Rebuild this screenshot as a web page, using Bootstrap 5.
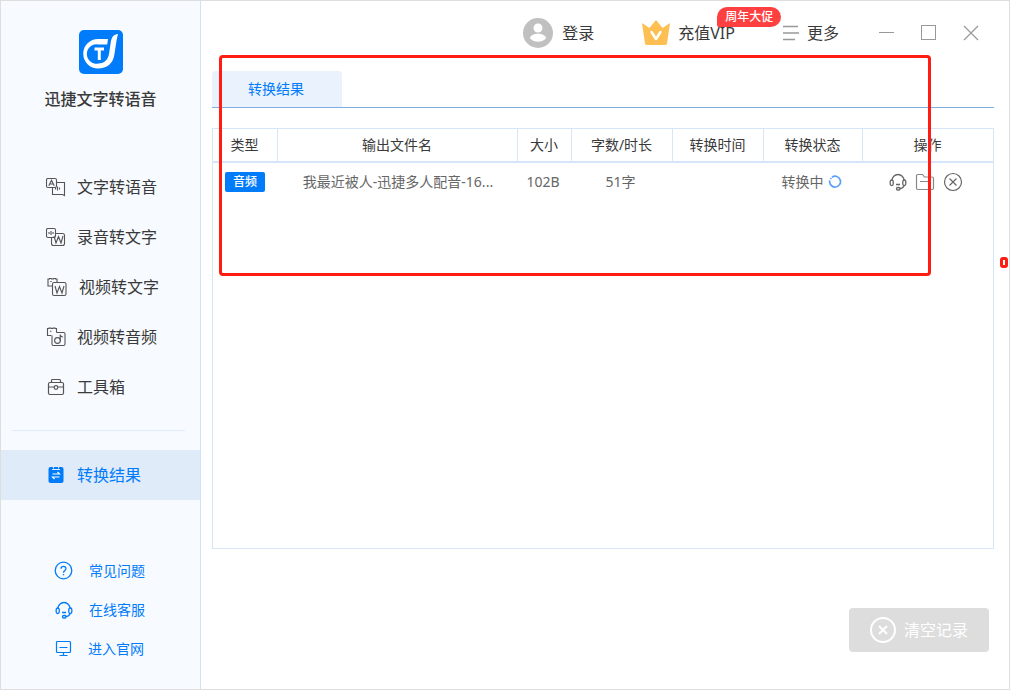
<!DOCTYPE html>
<html lang="zh-CN">
<head>
<meta charset="utf-8">
<meta name="viewport" content="width=device-width, initial-scale=1">
<title>迅捷文字转语音</title>
<link href="https://cdn.jsdelivr.net/npm/bootstrap@5.3.0/dist/css/bootstrap.min.css" rel="stylesheet">
<style>
  body { font-family: "Noto Sans", "Noto Sans CJK SC", sans-serif; font-size: 14px; line-height: 20px; color: #3a3a3a; background: #fff; }
  svg { display: block; flex: none; }
  button { color: inherit; }
  .app { border: 1px solid #dedede; }
  .side { width: 200px; flex: none; background: #f7faff; border-right: 1px solid #cfe2f7; }
  .brand { padding-top: 29px; height: 161px; }
  .brand h1 { font-size: 16px; line-height: 24px; font-weight: 500; margin: 13px 0 0; }
  .side-link { height: 50px; padding-left: 45px; gap: 11px; font-size: 16px; color: #3a3a3a; text-decoration: none; }
  .side-link.active { background: #dfebf8; color: #007bfa; }
  .side-rule { height: 1px; margin: 18px 15px 19px 11px; background: #dfedfb; }
  .help { margin-top: 51px; }
  .help a { height: 39px; padding-left: 53px; gap: 15px; color: #007bfa; text-decoration: none; }
  .content { min-width: 0; padding: 0 15px 37px 11px; }
  .topbar { height: 70px; padding: 0 15px 6px 0; font-size: 16px; }
  .window-tools { margin-left: 40px; gap: 26px; }
  .plain { border: 0; background: none; padding: 0; }
  .promo { left: 75px; top: -13px; height: 20px; padding: 0 8px; font-size: 12px; line-height: 20px; font-weight: 500; color: #fff; background: #ff4040; border-radius: 10px 10px 10px 2px; white-space: nowrap; }
  .tabs { border-bottom: 1px solid #7eaee2; margin-bottom: 20px; }
  .tab-btn { width: 130px; height: 36px; padding-right: 2px; color: #007bfa; background: #eaf2fe; border-radius: 4px 4px 0 0; }
  .result-box { border: 1px solid #d6e6f8; }
  .results { width: 100%; table-layout: fixed; border-collapse: separate; border-spacing: 0; text-align: center; }
  .results th { height: 34px; padding: 0 1px 0 0; font-weight: 400; border-right: 1px solid #d6e6f8; border-bottom: 2px solid #d6e6f8; }
  .results th:last-child { border-right: 0; }
  .results td { height: 37px; padding: 0 4px 0 0; color: #666; }
  .c-type { width: 65px; } .c-size { width: 54px; } .c-len { width: 101px; }
  .c-time { width: 91px; } .c-state { width: 99px; } .c-ops { width: 130px; }
  .kind { display: block; width: 40px; height: 20px; margin-left: 12px; font-size: 12px; line-height: 20px; font-weight: 500; color: #fff; background: #007bfa; border-radius: 2px; }
  .clear-btn { width: 140px; height: 44px; margin: 59px 5px 0 0; font-size: 16px; gap: 8px; color: #fff; background: #ddd; border-radius: 4px; }
  .frame { left: 18px; right: 78px; top: 54px; height: 221px; border: 3px solid #ff1c12; border-radius: 4px; pointer-events: none; }
  .frame-mini { right: 1px; top: 256px; width: 8px; height: 11px; border: 3px solid #ff1c12; border-radius: 3px; pointer-events: none; }
</style>
</head>
<body>
<svg width="0" height="0" class="position-absolute" aria-hidden="true">
  <symbol id="headset" viewBox="0 0 18 18"><g fill="none" stroke="currentColor" stroke-width="1.3"><path d="M3 7.500a6 6 0 0 1 12 0"/><rect x="1.2" y="7" width="3" height="5.500" rx="1.500"/><rect x="13.800" y="7" width="3" height="5.500" rx="1.500"/><path d="M15 12.500c-.5 2-2 3-4.500 3.200M7 11.500h4"/><rect x="7.500" y="14.500" width="3.500" height="2.500" rx="1.200"/></g></symbol>
</svg>
<div class="app d-flex min-vh-100">
  <aside class="side d-flex flex-column">
    <div class="brand d-flex flex-column align-items-center">
      <svg width="44" height="44" viewBox="0 0 44 44"><rect width="44" height="44" rx="5" fill="#007bfa"/><path d="M29 9L28.200 14.500H19.500A9.700 9.700 0 1 0 19.500 33.500C25.500 33.500 29 29.500 30 24L31.800 12C32.600 7 34.800 4.300 39 4C38.300 7 37.800 9 37.300 12L35.300 25C34 33.500 28 38.500 19 38.500A14.700 14.700 0 1 1 19 9Z" fill="#fff"/><path d="M15.500 19h9.500M20.300 19V30" fill="none" stroke="#fff" stroke-width="3"/></svg>
      <h1>迅捷文字转语音</h1>
    </div>
    <nav>
      <a href="#" class="side-link d-flex align-items-center"><svg width="20" height="20" viewBox="0 0 20 20" fill="none" stroke="#555" stroke-width="1.100"><path d="M10.500 5.500h8v13l-2-1h-10v-7"/><rect x=".5" y="1.500" width="10" height="9" rx="1.500"/><path d="M2.800 8.800L5.500 3.300l2.700 5.500M3.800 7h3.500M9.500 12.500v-2M11.500 13.500v-4M13.500 12.500v-2"/></svg>文字转语音</a>
      <a href="#" class="side-link d-flex align-items-center"><svg width="20" height="20" viewBox="0 0 20 20" fill="none" stroke="#555" stroke-width="1.100"><path d="M9.500 6.500h7a2 2 0 0 1 2 2v8a2 2 0 0 1-2 2h-9a2 2 0 0 1-2-2v-5.500"/><rect x=".5" y="1.500" width="9" height="9" rx="1.500"/><path d="M3 5v2M5 4v4M7 5v2M8 9l2 7 2.500-6.500L15 16l2-7"/></svg>录音转文字</a>
      <a href="#" class="side-link d-flex align-items-center"><svg width="22" height="20" viewBox="-1 0 22 20" fill="none" stroke="#555" stroke-width="1.100"><path d="M5 9H1V2h1.500V1.500h2V2h2v-.5h2V2h1.500v3.500M3.300 4.500h1.400M5 9h1"/><rect x="5.500" y="5.500" width="13.500" height="13" rx="1.500"/><path d="M8 9l2 7 2.500-6.500L15 16l2-7"/></svg>视频转文字</a>
      <a href="#" class="side-link d-flex align-items-center"><svg width="20" height="20" viewBox="0 0 20 20" fill="none" stroke="#555" stroke-width="1.100"><path d="M5.500 8.500H1.500V1.500H3V1h2v.5h2V1h2v.5h1.500v4M4 4.300h1.400"/><path d="M10.500 5.500h7A1.500 1.500 0 0 1 19 7v10a1.500 1.500 0 0 1-1.500 1.500H7.500A1.500 1.500 0 0 1 6 17V8.500"/><circle cx="11.500" cy="13.500" r="2.900"/><path d="M14.200 14V7.500c.3 1.800 1.200 2.500 2.800 2.500"/></svg>视频转音频</a>
      <a href="#" class="side-link d-flex align-items-center"><svg width="20" height="20" viewBox="1 0 20 20" fill="none" stroke="#555" stroke-width="1.200"><rect x="3.500" y="5.500" width="15" height="12" rx="1.500"/><path d="M6.500 5.500v-2a1 1 0 0 1 1-1h7a1 1 0 0 1 1 1v2M3.500 10h5.500M13 10h5.500"/><circle cx="11" cy="10.500" r="1.800"/></svg>工具箱</a>
    </nav>
    <div class="side-rule"></div>
    <a href="#" class="side-link active d-flex align-items-center" aria-current="page"><svg width="20" height="20" viewBox="0 0 20 20"><rect x="2.500" y="2" width="15" height="16" rx="2" fill="#007bfa"/><path d="M6 4.500h8M7.500 1.500v2M12.500 1.500v2" stroke="#dfebf8"/><path d="M6.500 9h7l-2-2M13.500 12h-7l2 2" fill="none" stroke="#fff" stroke-width="1.200"/></svg>转换结果</a>
    <div class="help">
      <a href="#" class="d-flex align-items-center"><svg width="20" height="20" viewBox="0 0 20 20" fill="none" stroke="#007bfa" stroke-width="1.300"><circle cx="9.500" cy="9.500" r="8.300"/><path d="M7 7.800C7 4.500 12.100 4.600 12 7.700c0 1.700-2.500 1.900-2.500 4M9.500 13v1.300"/></svg>常见问题</a>
      <a href="#" class="d-flex align-items-center"><svg width="20" height="18"><use href="#headset"/></svg>在线客服</a>
      <a href="#" class="d-flex align-items-center"><svg width="19" height="20" viewBox="0 0 19 20" fill="none" stroke="#007bfa" stroke-width="1.200"><rect x="2.500" y="2.500" width="14" height="11" rx="1"/><path d="M5.500 8.500h8M9.500 13.500v2.500M5.500 16.500h8"/></svg>进入官网</a>
    </div>
  </aside>

  <main class="content flex-grow-1 d-flex flex-column position-relative">
    <header class="topbar d-flex align-items-center justify-content-end">
      <button class="plain d-flex align-items-center gap-2 me-5"><svg width="31" height="30" viewBox="0 0 31 30"><circle cx="15" cy="15" r="15" fill="#c0c0c0"/><circle cx="15" cy="10" r="4.500" fill="#fff"/><path d="M7 20.500c0-3 4-4.800 8-4.800s8 1.800 8 4.800c-2 2-5 3.300-8 3.300s-6-1.300-8-3.300z" fill="#fff"/></svg>登录</button>
      <button class="plain d-flex align-items-center gap-2 position-relative me-5"><svg width="28" height="26" viewBox="0 0 28 26"><path d="M0 3l7.500 5L14 0l6.500 8L28 3l-3 20.500q-.3 1.500-2 1.500H5q-1.700 0-2-1.500z" fill="#fdbe52"/><path d="M9.500 12l4.500 7 4.500-7" fill="none" stroke="#fff" stroke-width="2.500" stroke-linecap="round" stroke-linejoin="round"/></svg>充值VIP<span class="promo position-absolute">周年大促</span></button>
      <button class="plain d-flex align-items-center gap-2"><svg width="16" height="16" viewBox="0 0 16 16" stroke="#999" stroke-width="1.500"><path d="M0 1.500h15M0 8h16M0 14.500h12"/></svg>更多</button>
      <div class="window-tools d-flex">
        <button class="plain" aria-label="最小化"><svg width="16" height="16" viewBox="0 0 16 16"><path d="M0 7.500h15" stroke="#999"/></svg></button>
        <button class="plain" aria-label="最大化"><svg width="16" height="16" viewBox="0 0 16 16"><rect x=".5" y=".5" width="14" height="14" fill="none" stroke="#999"/></svg></button>
        <button class="plain" aria-label="关闭"><svg width="16" height="16" viewBox="0 0 16 16"><path d="M1 1l14 14M15 1L1 15" stroke="#999" stroke-width="1.200"/></svg></button>
      </div>
    </header>
    <div class="tabs"><button class="plain tab-btn">转换结果</button></div>
    <div class="result-box flex-grow-1">
      <table class="results">
        <thead><tr><th class="c-type">类型</th><th>输出文件名</th><th class="c-size">大小</th><th class="c-len">字数/时长</th><th class="c-time">转换时间</th><th class="c-state">转换状态</th><th class="c-ops">操作</th></tr></thead>
        <tbody><tr>
          <td><span class="kind">音频</span></td>
          <td class="text-truncate pe-0">我最近被人-迅捷多人配音-16...</td>
          <td>102B</td><td>51字</td><td></td>
          <td><div class="d-flex align-items-center justify-content-center gap-1">转换中<svg width="14" height="14" viewBox="0 0 14 14"><path d="M4 2.200A5.400 5.400 0 1 1 1.800 5.500M2.500 4l.8-1" fill="none" stroke="#5a9ffb" stroke-width="1.700"/></svg></div></td>
          <td><div class="d-flex align-items-center justify-content-center">
            <button class="plain" aria-label="客服"><svg width="18" height="18"><use href="#headset"/></svg></button>
            <button class="plain mx-2" aria-label="打开文件夹"><svg width="20" height="18" viewBox="0 0 20 18" fill="none" stroke="#888" stroke-width="1.200"><path d="M1.500 14V3a1.500 1.500 0 0 1 1.500-1.500h4.500l2 2.500H17A1.500 1.500 0 0 1 18.500 5.500V15a1.500 1.500 0 0 1-1.500 1.500H3A1.500 1.500 0 0 1 1.500 15zM5 8.500h9"/></svg></button>
            <button class="plain" aria-label="取消"><svg width="20" height="20" viewBox="0 0 20 20" fill="none" stroke="#666" stroke-width="1.200"><circle cx="10" cy="10" r="8.500"/><path d="M6.500 6.500l7 7M13.500 6.500l-7 7"/></svg></button>
          </div></td>
        </tr></tbody>
      </table>
    </div>
    <button class="plain clear-btn align-self-end d-flex align-items-center justify-content-center"><svg width="26" height="26" viewBox="0 0 26 26" fill="none" stroke="#fff" stroke-width="2"><circle cx="13" cy="13" r="12"/><path d="M9 9l8 8M17 9l-8 8"/></svg>清空记录</button>
    <div class="frame position-absolute"></div>
    <div class="frame-mini position-absolute"></div>
  </main>
</div>
<script src="https://cdn.jsdelivr.net/npm/bootstrap@5.3.0/dist/js/bootstrap.bundle.min.js"></script>
</body>
</html>
